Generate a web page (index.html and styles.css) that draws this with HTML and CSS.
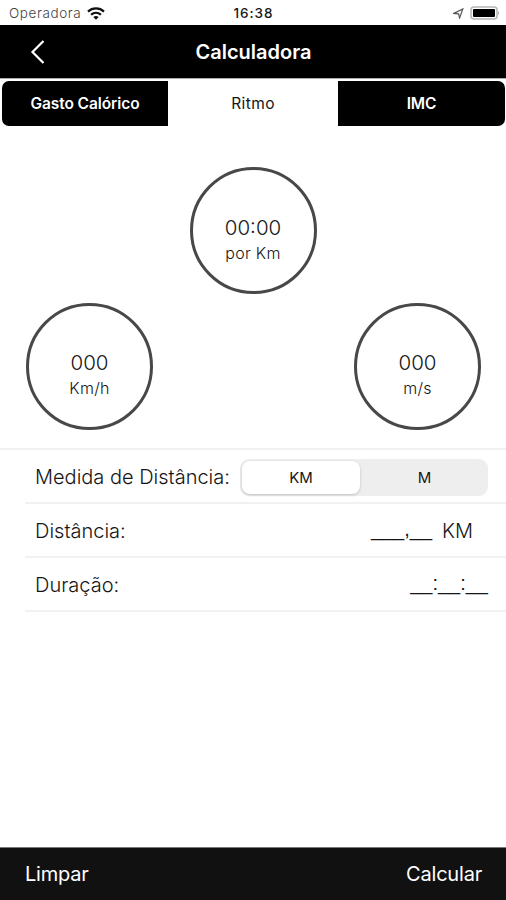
FILE: index.html
```html
<!DOCTYPE html>
<html lang="pt-BR">
<head>
    <meta charset="UTF-8">
    <meta name="viewport" content="width=device-width, initial-scale=1.0">
    <title>Calculadora</title>
    <link rel="stylesheet" href="styles.css">
</head>
<body>

    <div class="screen">
        <div class="status-bar">
            <div class="carrier">
                <span class="carrier-name">Operadora</span>
                <svg class="wifi" width="18" height="13" viewBox="0 0 18 13">
                    <path d="M1 4.6 C5.5 0.4, 12.5 0.4, 17 4.6"></path>
                    <path d="M4 7.8 C7 5.1, 11 5.1, 14 7.8"></path>
                    <path class="wifi-dot" d="M6.3 10.1 Q9 8.1 11.7 10.1 L9 12.8 Z"></path>
                </svg>
            </div>
            <span class="clock">16:38</span>
            <div class="indicators">
                <svg width="11" height="11" viewBox="0 0 11 11">
                    <path class="location" d="M0.8 5.4 L9.8 1 L6.6 10 L5.6 5.9 Z"></path>
                </svg>
                <svg width="30" height="14" viewBox="0 0 30 14">
                    <rect class="battery-case" x="1" y="1" width="26" height="12" rx="3"></rect>
                    <rect x="3" y="3" width="22" height="8" rx="1"></rect>
                    <path class="battery-tip" d="M28 5 Q30 7 28 9 Z"></path>
                </svg>
            </div>
        </div>

        <header class="nav-bar">
            <svg class="back" width="16" height="26" viewBox="0 0 16 26">
                <path d="M13.5 2 L2.5 13 L13.5 24"></path>
            </svg>
            <h1 class="title">Calculadora</h1>
        </header>

        <nav class="tabs">
            <span class="tab">Gasto Calórico</span>
            <span class="tab active">Ritmo</span>
            <span class="tab">IMC</span>
        </nav>

        <section class="results">
            <div class="gauge gauge-pace">
                <span class="value">00:00</span>
                <span class="unit">por Km</span>
            </div>
            <div class="gauge-row">
                <div class="gauge">
                    <span class="value">000</span>
                    <span class="unit">Km/h</span>
                </div>
                <div class="gauge">
                    <span class="value">000</span>
                    <span class="unit">m/s</span>
                </div>
            </div>
        </section>

        <section class="form">
            <div class="form-row">
                <span class="label">Medida de Distância:</span>
                <div class="segmented">
                    <span class="segment selected">KM</span>
                    <span class="segment">M</span>
                </div>
            </div>
            <div class="form-row">
                <span class="label">Distância:</span>
                <span class="field distance"><span class="mask">___,__</span><span>KM</span></span>
            </div>
            <div class="form-row">
                <span class="label">Duração:</span>
                <span class="field mask">__:__:__</span>
            </div>
        </section>

        <footer class="toolbar">
            <span>Limpar</span>
            <span>Calcular</span>
        </footer>
    </div>

</body>
</html>
```

FILE: styles.css
```css
:root {
    --color-bar: #000;
    --color-toolbar: #111;
    --color-ring: #484848;
    --color-line: #f1f1f1;
    --color-text: #161616;
    --font-family: Inter, "Liberation Sans", sans-serif;
}

* {
    box-sizing: border-box;
}

body {
    margin: 0;
    background-color: #fff;
    color: var(--color-text);
    font-family: var(--font-family);
}

.screen {
    display: flex;
    flex-direction: column;
    height: 900px;
    overflow: hidden;
}

/* --- Status bar --- */
.status-bar {
    display: grid;
    grid-template-columns: 1fr auto 1fr;
    align-items: center;
    height: 25px;
    padding: 1px 6px 0 9px;
    font-size: 13px;
}

.carrier {
    display: flex;
    align-items: center;
    gap: 6px;
}

.carrier-name {
    color: #444;
    font-weight: 300;
    font-size: 13.5px;
    letter-spacing: 0.6px;
}

.wifi {
    fill: none;
    stroke: #111;
    stroke-width: 2.2;
}

.wifi .wifi-dot {
    fill: #111;
    stroke: none;
}

.clock {
    margin-right: 2px;
    font-size: 13.5px;
    font-weight: 500;
    letter-spacing: 1px;
}

.indicators {
    display: flex;
    justify-content: flex-end;
    align-items: center;
    gap: 6px;
}

.location {
    fill: none;
    stroke: #555;
    stroke-width: 1.2;
}

.battery-case {
    fill: #fff;
    stroke: #b5b5b5;
    stroke-width: 1.5;
}

.battery-tip {
    fill: #aaa;
}

/* --- Navigation bar --- */
.nav-bar {
    display: grid;
    grid-template-columns: 60px 1fr 60px;
    align-items: center;
    height: 53px;
    background-color: var(--color-bar);
    color: #fff;
}

.back {
    margin-left: 30px;
    fill: none;
    stroke: #fff;
    stroke-width: 2.2;
}

.title {
    margin: 0;
    padding-left: 1px;
    font-size: 20px;
    font-weight: 600;
    text-align: center;
}

/* --- Tabs --- */
.tabs {
    display: grid;
    grid-template-columns: 166px 170px 167px;
    height: 48px;
    padding: 2px 1px 0 2px;
    border-top: 1px solid #aaa;
    font-size: 15.5px;
    font-weight: 600;
    letter-spacing: -0.1px;
}

.tab {
    display: flex;
    align-items: center;
    justify-content: center;
    background-color: var(--color-bar);
    color: #fff;
}

.tab:first-child {
    border-radius: 7px 0 0 7px;
}

.tab:last-child {
    border-radius: 0 7px 7px 0;
}

.tab.active {
    background-color: #fff;
    color: var(--color-text);
    font-weight: 400;
    letter-spacing: 0.4px;
}

/* --- Result circles --- */
.results {
    display: flex;
    flex-direction: column;
    align-items: center;
    gap: 9px;
    height: 322px;
    padding-top: 41px;
}

.gauge {
    display: flex;
    flex-direction: column;
    align-items: center;
    width: 127px;
    height: 127px;
    padding-top: 44px;
    border: 3px solid var(--color-ring);
    border-radius: 50%;
}

.gauge-pace {
    padding-top: 45px;
}

.gauge-row {
    display: flex;
    justify-content: space-between;
    width: 100%;
    padding: 0 25px 0 26px;
}

.value {
    font-size: 20.5px;
    font-weight: 300;
    line-height: 26px;
}

.unit {
    font-size: 16px;
    font-weight: 300;
    line-height: 25px;
    letter-spacing: 0.3px;
}

/* --- Form --- */
.form {
    border-top: 2px solid var(--color-line);
}

.form-row {
    display: flex;
    align-items: center;
    justify-content: space-between;
    height: 54px;
    margin-left: 25px;
    padding: 2px 18px 0 10px;
    border-bottom: 2px solid var(--color-line);
}

.label,
.field {
    font-size: 20px;
    font-weight: 300;
    white-space: nowrap;
}

.segmented {
    display: flex;
    width: 248px;
    height: 37px;
    padding: 2px;
    border-radius: 9px;
    background-color: #eee;
}

.segment {
    display: flex;
    flex: 1;
    align-items: center;
    justify-content: center;
    padding-left: 3px;
    font-size: 15px;
}

.segment.selected {
    flex: 0 0 118px;
    padding-left: 0;
    border-radius: 8px;
    background-color: #fff;
    box-shadow: 0 1px 3px rgba(0, 0, 0, 0.2);
}

/* wide underscores for the blank digits */
.mask {
    padding-bottom: 4px;
    font-family: "Liberation Sans", Arial, sans-serif;
}

.distance {
    display: flex;
    align-items: center;
    gap: 10px;
    padding-right: 15px;
}

/* --- Bottom toolbar --- */
.toolbar {
    display: flex;
    align-items: center;
    justify-content: space-between;
    height: 53px;
    margin-top: auto;
    padding: 0 24px 0 25px;
    border-top: 1px solid #777;
    background-color: var(--color-toolbar);
    color: #fff;
    font-size: 20px;
    letter-spacing: -0.2px;
}
```
